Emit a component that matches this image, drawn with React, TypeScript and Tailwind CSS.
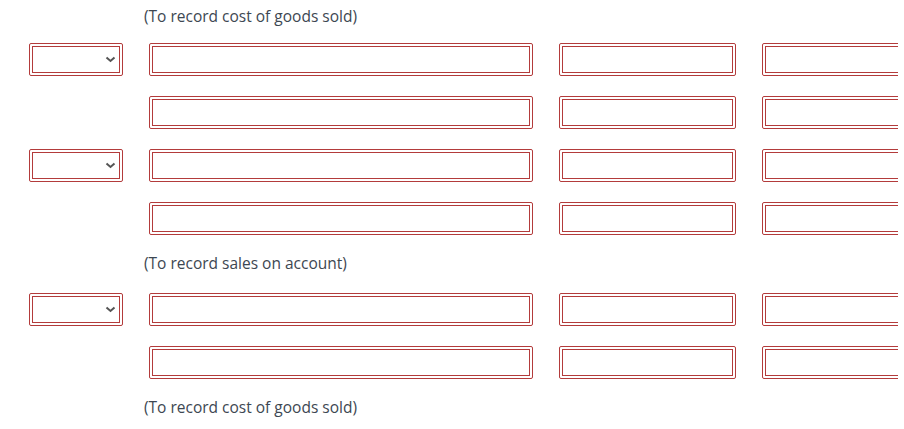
import React from 'react'

function Box({ w, select = false }: { w: string; select?: boolean }) {
  return (
    <div className={`${w} h-[33px] shrink-0 rounded-[2px] border border-[#b33b3b] bg-white p-[2px]`}>
      <div className="relative h-full w-full border border-[#b33b3b]">
        {select && (
          <svg
            className="absolute right-[3px] top-[9px]"
            width="11"
            height="7"
            viewBox="0 0 11 7"
            fill="none"
          >
            <path d="M1.5 1.5 L5.5 5 L9.5 1.5" stroke="#555" strokeWidth="2" />
          </svg>
        )}
      </div>
    </div>
  )
}

function Row({ select }: { select: boolean }) {
  return (
    <div className="flex gap-[26px] py-[10px]">
      {select ? <Box w="w-[94px]" select /> : <div className="w-[94px] shrink-0" />}
      <Box w="w-[384px]" />
      <Box w="w-[177px]" />
      <Box w="w-[177px]" />
    </div>
  )
}

function Note({ text, h }: { text: string; h: string }) {
  return (
    <div
      className={`${h} ml-[115px] flex items-center text-[15.5px] text-[#3d4752]`}
      style={{ fontFamily: '"Open Sans", "DejaVu Sans", sans-serif' }}
    >
      {text}
    </div>
  )
}

export default function App() {
  return (
    <div className="h-[429px] w-[898px] overflow-hidden bg-white pl-[29px]">
      <Note text="(To record cost of goods sold)" h="h-[33px]" />
      <Row select />
      <Row select={false} />
      <Row select />
      <Row select={false} />
      <Note text="(To record sales on account)" h="h-[38px]" />
      <Row select />
      <Row select={false} />
      <Note text="(To record cost of goods sold)" h="h-[38px]" />
    </div>
  )
}
